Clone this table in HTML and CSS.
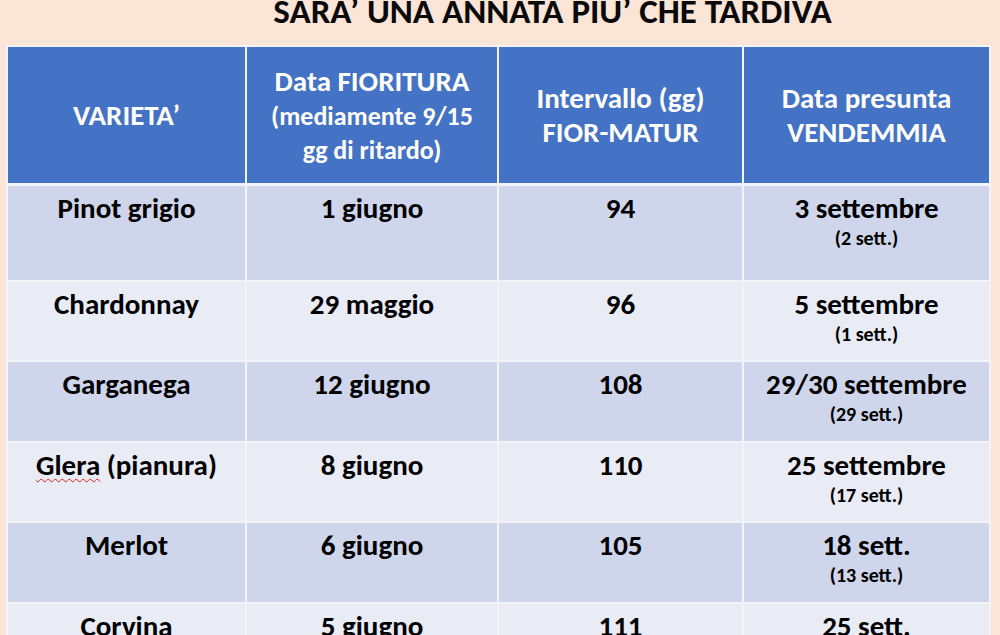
FILE: index.html
```html
<!DOCTYPE html>
<html lang="it">
<head>
<meta charset="utf-8">
<title>Sara' una annata piu' che tardiva</title>
<link rel="stylesheet" href="styles.css">
</head>
<body>
<div class="slide">
  <h1 class="title">SARA’ UNA ANNATA PIU’ CHE TARDIVA</h1>
  <div class="table">
    <div class="cell head"><span>VARIETA’</span></div>
    <div class="cell head"><span>Data FIORITURA<br><small>(mediamente 9/15<br>gg di ritardo)</small></span></div>
    <div class="cell head"><span>Intervallo (gg)<br>FIOR-MATUR</span></div>
    <div class="cell head"><span>Data presunta<br>VENDEMMIA</span></div>

    <div class="cell odd">Pinot grigio</div>
    <div class="cell odd">1 giugno</div>
    <div class="cell odd">94</div>
    <div class="cell odd">3 settembre<span class="note">(2 sett.)</span></div>

    <div class="cell even">Chardonnay</div>
    <div class="cell even">29 maggio</div>
    <div class="cell even">96</div>
    <div class="cell even">5 settembre<span class="note">(1 sett.)</span></div>

    <div class="cell odd">Garganega</div>
    <div class="cell odd">12 giugno</div>
    <div class="cell odd">108</div>
    <div class="cell odd">29/30 settembre<span class="note">(29 sett.)</span></div>

    <div class="cell even"><span><span class="spell">Glera</span> (pianura)</span></div>
    <div class="cell even">8 giugno</div>
    <div class="cell even">110</div>
    <div class="cell even">25 settembre<span class="note">(17 sett.)</span></div>

    <div class="cell odd">Merlot</div>
    <div class="cell odd">6 giugno</div>
    <div class="cell odd">105</div>
    <div class="cell odd">18 sett.<span class="note">(13 sett.)</span></div>

    <div class="cell even">Corvina</div>
    <div class="cell even">5 giugno</div>
    <div class="cell even">111</div>
    <div class="cell even">25 sett.</div>
  </div>
</div>
</body>
</html>
```

FILE: styles.css
```css
html, body {
  margin: 0;
  padding: 0;
}
body {
  width: 1000px;
  height: 635px;
  overflow: hidden;
  background: #fbe5d6;
  font-family: "Carlito", "Lato", "Liberation Sans", sans-serif;
  font-weight: 700;
  color: #000;
}
.slide {
  display: flex;
  flex-direction: column;
}
.title {
  margin: 0;
  height: 45px;
  box-sizing: border-box;
  padding-left: 105px;
  padding-top: 0;
  font-size: 35px;
  line-height: 23px;
  text-align: center;
  font-weight: 700;
  color: #0a0a0a;
}
.table {
  margin-left: 6px;
  width: 985px;
  box-sizing: border-box;
  padding: 2px;
  background: #f3f4f9;
  display: grid;
  grid-template-columns: 237px 250px 243px 245px;
  grid-template-rows: 137px 94px 78px 79px 78px 79px 78px;
  gap: 2px;
}
.cell {
  display: flex;
  flex-direction: column;
  align-items: center;
  text-align: center;
  font-size: 29px;
  line-height: 35px;
  padding-top: 5px;
  box-sizing: border-box;
}
.head {
  background: #4472c4;
  color: #fff;
  justify-content: center;
  padding-top: 0;
  margin-bottom: 1px;
  line-height: 34px;
}
.head small {
  font-size: 26px;
  line-height: 32px;
}
.odd {
  background: #cfd5ea;
}
.even {
  background: #e9ebf5;
}
.note {
  display: block;
  font-size: 20px;
  line-height: 25px;
}
.spell {
  text-decoration: underline wavy #e02020;
  text-decoration-thickness: 1px;
  text-underline-offset: 3px;
  text-decoration-skip-ink: none;
}
```
